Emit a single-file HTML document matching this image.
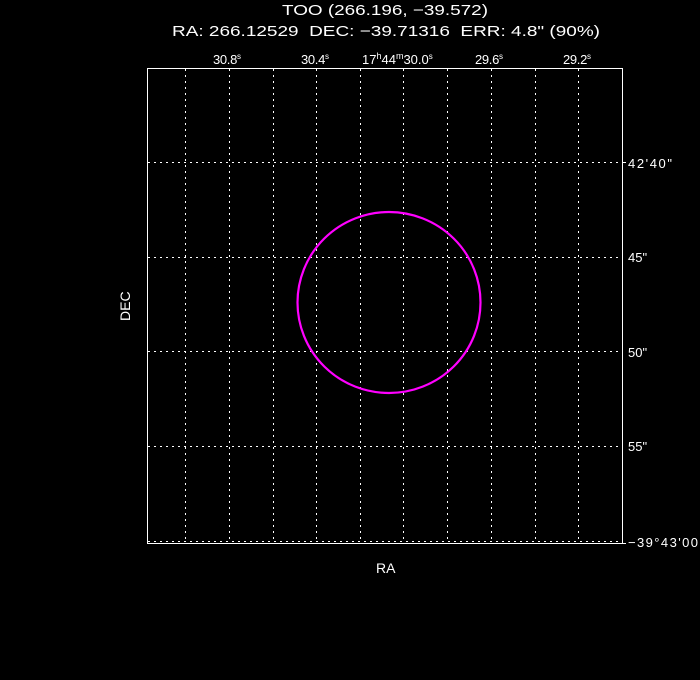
<!DOCTYPE html>
<html><head><style>html,body{margin:0;padding:0;background:#000;}svg{display:block}text{white-space:pre}</style></head>
<body>
<svg width="700" height="680" viewBox="0 0 700 680" xmlns="http://www.w3.org/2000/svg" font-family="Liberation Sans, sans-serif" fill="#fff" xml:space="preserve">
<rect width="700" height="680" fill="#000"/>
<text x="282" y="15" font-size="15" textLength="206" lengthAdjust="spacingAndGlyphs">TOO (266.196, −39.572)</text>
<text x="172" y="36" font-size="15" textLength="428" lengthAdjust="spacingAndGlyphs">RA: 266.12529  DEC: −39.71316  ERR: 4.8" (90%)</text>
<g font-size="13">
<text x="213" y="64" textLength="28">30.8<tspan dy="-5" font-size="8">s</tspan></text>
<text x="301" y="64" textLength="28">30.4<tspan dy="-5" font-size="8">s</tspan></text>
<text x="362" y="64">17<tspan dy="-5" font-size="9">h</tspan><tspan dy="5">44</tspan><tspan dy="-5" font-size="9">m</tspan><tspan dy="5">30.0</tspan><tspan dy="-5" font-size="8">s</tspan></text>
<text x="475" y="64" textLength="28">29.6<tspan dy="-5" font-size="8">s</tspan></text>
<text x="563" y="64" textLength="28">29.2<tspan dy="-5" font-size="8">s</tspan></text>
<text x="628" y="168" textLength="44">42'40"</text>
<text x="628" y="262">45"</text>
<text x="628" y="357">50"</text>
<text x="628" y="451">55"</text>
<text x="628" y="547" textLength="70">−39°43'00</text>
<text x="376" y="573" font-size="14">RA</text>
<text x="0" y="0" font-size="14" transform="translate(130,321) rotate(-90)">DEC</text>
</g>
<g stroke="#fff" stroke-width="1" stroke-dasharray="2,4" fill="none">
<line x1="185.5" y1="69" x2="185.5" y2="542"/>
<line x1="229.5" y1="69" x2="229.5" y2="542"/>
<line x1="273.5" y1="69" x2="273.5" y2="542"/>
<line x1="316.5" y1="69" x2="316.5" y2="542"/>
<line x1="360.5" y1="69" x2="360.5" y2="542"/>
<line x1="403.5" y1="69" x2="403.5" y2="542"/>
<line x1="447.5" y1="69" x2="447.5" y2="542"/>
<line x1="491.5" y1="69" x2="491.5" y2="542"/>
<line x1="535.5" y1="69" x2="535.5" y2="542"/>
<line x1="578.5" y1="69" x2="578.5" y2="542"/>
<line x1="148" y1="162.5" x2="622" y2="162.5"/>
<line x1="148" y1="257.5" x2="622" y2="257.5"/>
<line x1="148" y1="351.5" x2="622" y2="351.5"/>
<line x1="148" y1="446.5" x2="622" y2="446.5"/>
<line x1="148" y1="541.5" x2="622" y2="541.5"/>
</g>
<line x1="622" y1="162.5" x2="626" y2="162.5" stroke="#fff"/>
<line x1="622" y1="543.5" x2="626" y2="543.5" stroke="#fff"/>
<rect x="147.5" y="68.5" width="475" height="475" fill="none" stroke="#fff" stroke-width="1"/>
<ellipse cx="389" cy="302.5" rx="91.5" ry="90.5" fill="none" stroke="#ff00ff" stroke-width="2.2"/>
</svg>
</body></html>
